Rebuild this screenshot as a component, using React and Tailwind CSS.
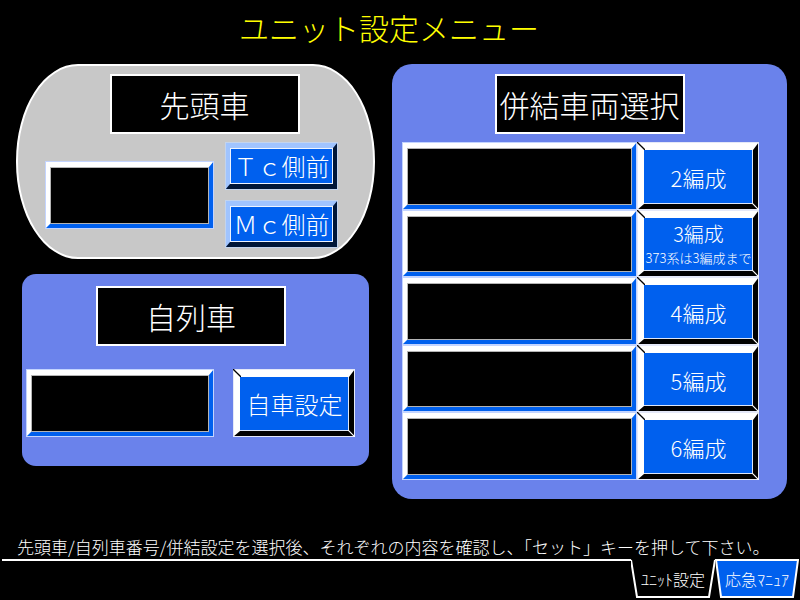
const displayBevel =
  "h-full w-0 min-w-0 flex-1 rounded-none border-t-[6px] border-r-[5px] border-b-[5px] border-l-[5px] border-t-white border-l-white border-r-[#0060ee] border-b-[#0060ee] bg-black text-center text-2xl text-white shadow-[inset_0_0_0_1px_#b4b4b4] outline-1 -outline-offset-1 outline-[#c3d4ff]";

function Display({ label }) {
  return <input type="text" readOnly aria-label={label} className={displayBevel} />;
}

function Heading({ children }) {
  return (
    <h2 className="flex h-[60px] w-[190px] items-center justify-center border-2 border-white bg-black text-[30px] leading-none whitespace-nowrap text-white">
      {children}
    </h2>
  );
}

/* Raised key with a white highlight, a black shade and cut corners */
function WhiteKey({ children }) {
  return (
    <button
      type="button"
      className="relative flex h-full w-[122px] shrink-0 flex-col items-center justify-center border-t-[8px] border-r-[6px] border-b-[6px] border-l-[7px] border-t-white border-r-black border-b-black border-l-white bg-[#0060ee] text-white shadow-[inset_-1px_-1px_0_0_#dde6f8] outline-1 -outline-offset-1 outline-[#e4e8f8]"
    >
      <svg className="absolute -top-2 -left-[7px] h-2 w-2" viewBox="0 0 8 8" aria-hidden="true">
        <path d="M0 0L8 8" stroke="#000" strokeWidth="1.3" />
      </svg>
      <svg className="absolute -right-[6px] -bottom-[6px] h-[7px] w-[7px]" viewBox="0 0 7 7" aria-hidden="true">
        <path d="M0 0L7 7" stroke="#fff" strokeWidth="1.2" />
      </svg>
      {children}
    </button>
  );
}

function BlueKey({ children }) {
  return (
    <button
      type="button"
      className="flex h-12 w-[113px] items-center justify-center border-t-[6px] border-r-[5px] border-b-[6px] border-l-[5px] border-t-[#a0c4ff] border-r-[#001638] border-b-[#001638] border-l-[#a0c4ff] bg-[#0060ee] text-2xl leading-none whitespace-nowrap text-white shadow-[inset_0_0_0_1px_#eef4ff] outline-1 -outline-offset-1 outline-[#c3d4ee]"
    >
      {children}
    </button>
  );
}

function Tab({ children, fill }) {
  return (
    <button
      type="button"
      className="relative flex h-[39px] w-[84px] items-center justify-center text-base leading-none whitespace-nowrap text-white"
    >
      <svg className="absolute inset-0 h-full w-full" viewBox="0 0 84 39" aria-hidden="true">
        {fill ? (
          <path d="M1 1H83L78 38H6Z" fill="#0060ee" stroke="#fff" strokeWidth="2" />
        ) : (
          <path d="M0 1L6 38H78L84 1" fill="none" stroke="#fff" strokeWidth="2" />
        )}
      </svg>
      <span className="relative">{children}</span>
    </button>
  );
}

const formations = ["2編成", "3編成", "4編成", "5編成", "6編成"];

export default function App() {
  return (
    <div className="flex min-h-screen flex-col bg-black font-['Noto_Sans_CJK_JP',sans-serif] font-light text-white">
      <header className="h-16 pr-[22px] text-center">
        <h1 className="text-[30px] leading-[54px] text-[#ffff00]">ユニット設定メニュー</h1>
      </header>

      <main className="grid grid-cols-[minmax(0,359fr)_minmax(0,395fr)] items-start gap-[17px] pr-[13px] pl-4">
        <div className="flex flex-col gap-[15px]">
          <section className="rounded-[62px/97px] border-2 border-white bg-[#c8c8c8] pt-2 pb-[9px]">
            <div className="flex justify-center pl-[18px]">
              <Heading>先頭車</Heading>
            </div>
            <div className="mt-2 flex items-center gap-[11px] pr-[35px] pl-[27px]">
              <div className="flex h-[68px] min-w-0 flex-1">
                <Display label="先頭車" />
              </div>
              <div className="flex flex-col gap-[10px]">
                <BlueKey>Ｔｃ側前</BlueKey>
                <BlueKey>Ｍｃ側前</BlueKey>
              </div>
            </div>
          </section>

          <section className="mx-[6px] rounded-[14px] bg-[#6a82eb] pt-3 pb-[29px]">
            <div className="flex justify-center pr-[9px]">
              <Heading>自列車</Heading>
            </div>
            <div className="mt-[23px] flex h-[68px] gap-[19px] pr-[14px] pl-1">
              <Display label="自列車" />
              <WhiteKey>
                <span className="text-2xl leading-none">自車設定</span>
              </WhiteKey>
            </div>
          </section>
        </div>

        <section className="rounded-[20px] bg-[#6a82eb] pt-[10px] pb-[19px]">
          <div className="flex justify-center">
            <Heading>併結車両選択</Heading>
          </div>
          <div className="mt-2 grid h-[338px] grid-rows-5 pr-7 pl-[10px]">
            {formations.map((name) => (
              <div key={name} className="flex min-h-0">
                <Display label={name} />
                <WhiteKey>
                  {name === "3編成" ? (
                    <>
                      <span className="text-xl leading-7">{name}</span>
                      <span className="text-[13px] leading-5 whitespace-nowrap">373系は3編成まで</span>
                    </>
                  ) : (
                    <span className="text-[22px] leading-none">{name}</span>
                  )}
                </WhiteKey>
              </div>
            ))}
          </div>
        </section>
      </main>

      <footer className="mt-auto">
        <p className="pb-px pl-[17px] text-[17px] leading-[22px] whitespace-nowrap">
          先頭車/自列車番号/併結設定を選択後、それぞれの内容を確認し、「セット」キーを押して下さい。
        </p>
        <nav className="flex pr-px pb-[2px] pl-[2px]">
          <div className="flex-1 border-t-2 border-white" />
          <Tab>ﾕﾆｯﾄ設定</Tab>
          <Tab fill>応急ﾏﾆｭｱ</Tab>
        </nav>
      </footer>
    </div>
  );
}
